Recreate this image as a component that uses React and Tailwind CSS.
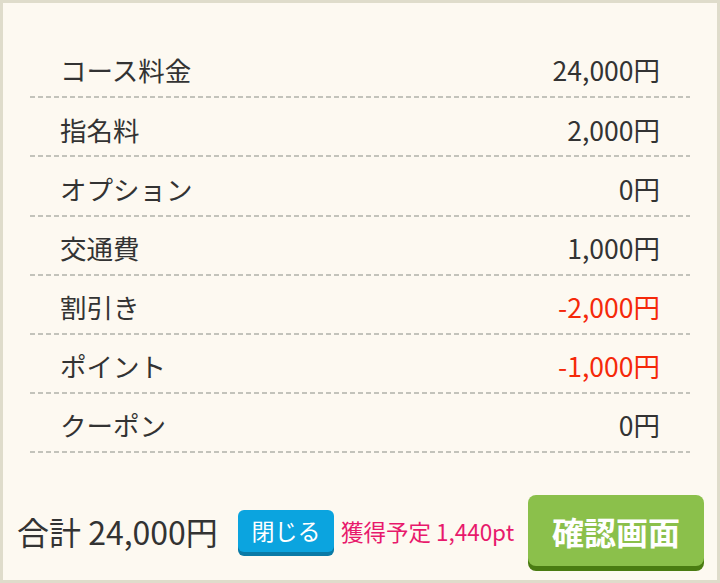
import React from 'react'

const rows = [
  { label: 'コース料金', value: '24,000円' },
  { label: '指名料', value: '2,000円' },
  { label: 'オプション', value: '0円' },
  { label: '交通費', value: '1,000円' },
  { label: '割引き', value: '-2,000円', minus: true },
  { label: 'ポイント', value: '-1,000円', minus: true },
  { label: 'クーポン', value: '0円' },
]

export default function App() {
  return (
    <div
      className="w-[720px] h-[583px] border-[3px] border-[#dfdccb] bg-[#fdf9f1] text-[#333333]"
      style={{ fontFamily: '"Noto Sans CJK JP", "Noto Sans", sans-serif' }}
    >
      <div className="pt-[36px] px-[27px]">
        {rows.map((r, i) => (
          <div key={i} className="flex flex-col h-[59.2px]">
            <div className="flex flex-1 justify-between items-center pt-[6px] px-[30px] text-[26.5px] leading-none">
              <span>{r.label}</span>
              <span className={r.minus ? 'text-[#f5290a]' : ''}>{r.value}</span>
            </div>
            <div className="h-[2px] bg-[linear-gradient(to_right,#c3c3bb_5px,transparent_5px)] bg-[length:8px_2px] bg-repeat-x" />
          </div>
        ))}
      </div>

      {/* footer */}
      <div className="flex items-center mt-[42px] pl-[14px]">
        <span className="text-[32px] leading-none">合計 24,000円</span>
        <button className="ml-[20px] w-[96px] h-[42px] rounded-md bg-[#0ba4df] shadow-[0_4px_0_#0a7aa6] text-white text-[23px] leading-none">
          閉じる
        </button>
        <span className="ml-[7px] text-[#e8196c] text-[22.5px] leading-none">獲得予定 1,440pt</span>
        <button className="ml-auto mr-[13px] w-[176px] h-[71px] rounded-lg bg-[#8bc04b] shadow-[0_5px_0_#4a7c12] text-white text-[32px] font-bold leading-none">
          確認画面
        </button>
      </div>
    </div>
  )
}
